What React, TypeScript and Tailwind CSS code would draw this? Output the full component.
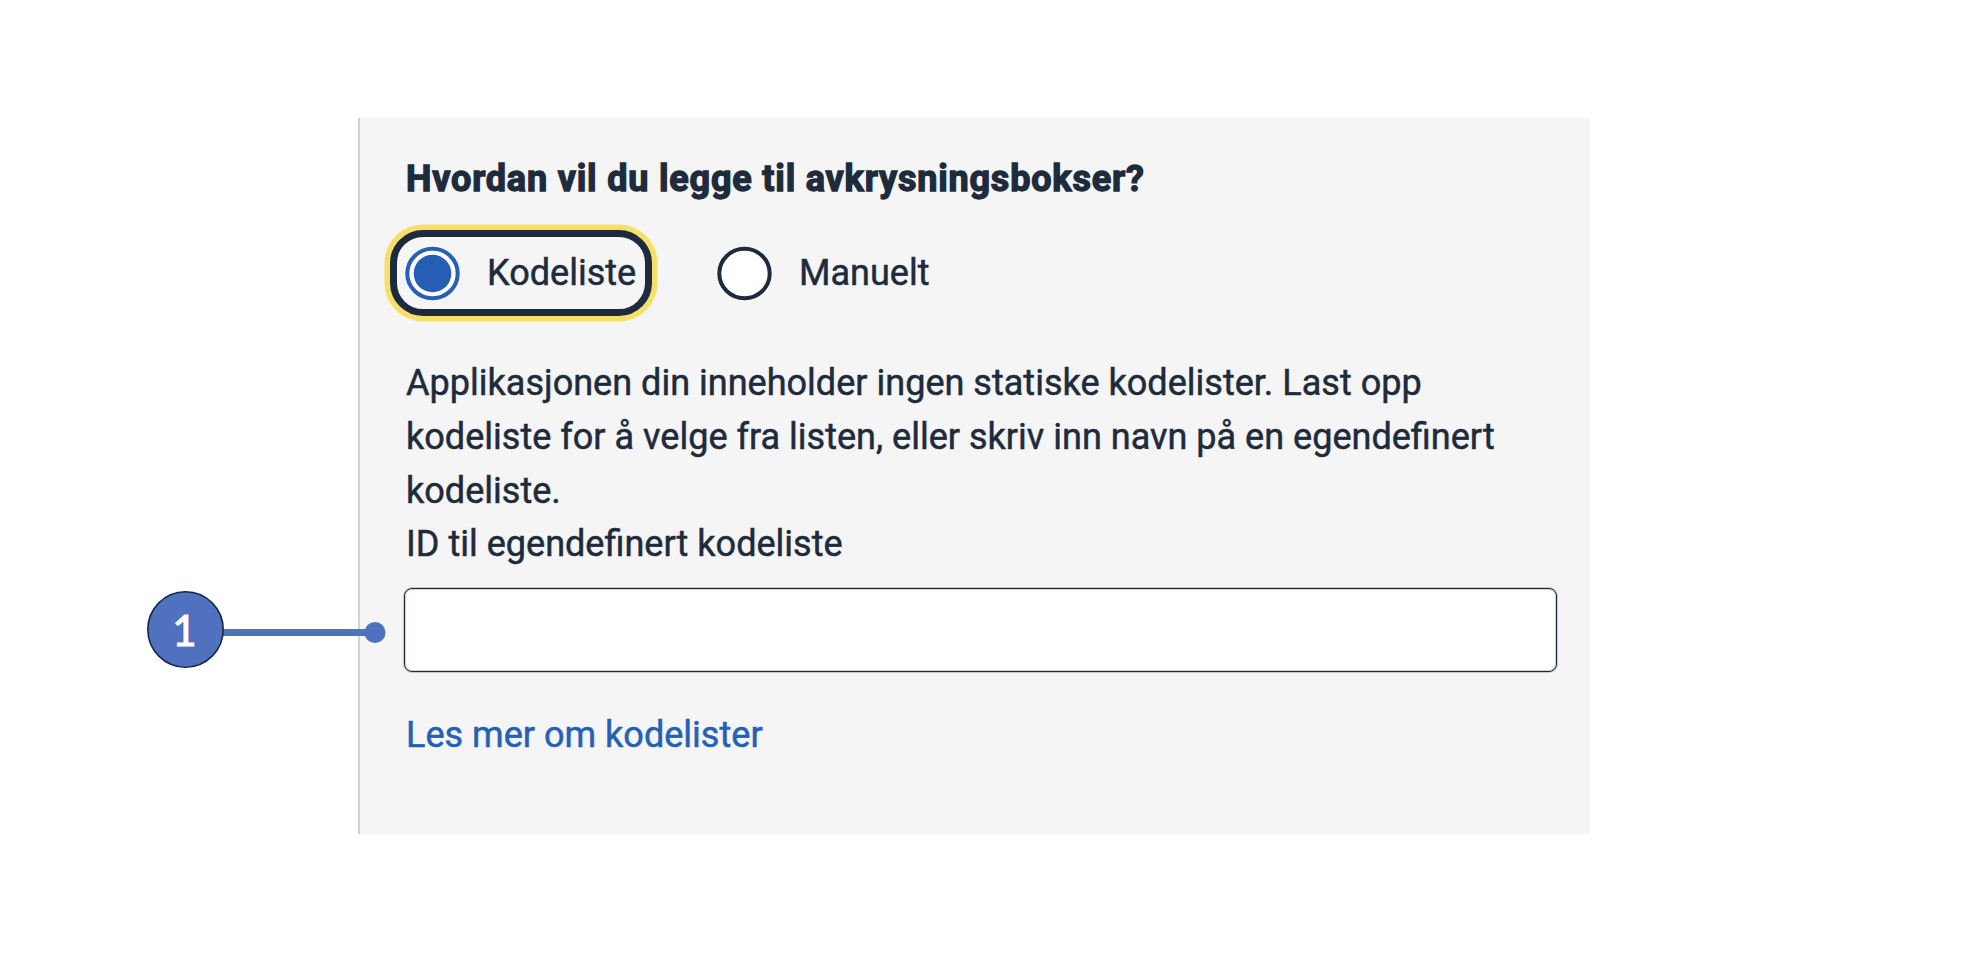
function RadioOption({ label, checked, className }: { label: string; checked?: boolean; className: string }) {
  return (
    <label className={`flex items-center ${className}`}>
      <svg className="block h-[55px] w-[55px] shrink-0" viewBox="0 0 55 55">
        <ellipse cx="27.5" cy="27.5" rx="25.2" ry="24.8" fill="#fff" stroke={checked ? "#2660b8" : "#1e2b3c"} strokeWidth="4" />
        {checked && <circle cx="27.5" cy="27.5" r="18.8" fill="#265eb5" />}
      </svg>
      <span className="ml-[27px] whitespace-nowrap leading-[54px]">{label}</span>
    </label>
  );
}

export default function App() {
  return (
    <div className="relative h-[962px] w-[1976px] overflow-hidden bg-white pt-[118px] pl-[358px] font-['Roboto',sans-serif] text-[36.06px] leading-[54px] text-[#1e2b3c] [-webkit-text-stroke:0.5px_currentColor]">
      <main className="flex h-[716px] w-[1232px] flex-col border-l-2 border-[#d2d3d4] bg-[#f5f5f5] pl-[44px]">
        <h1 className="mt-[34px] ml-[2px] text-[36px] leading-[54px] font-bold tracking-[0.81px] whitespace-nowrap [-webkit-text-stroke:1.3px_currentColor]">
          Hvordan vil du legge til avkrysningsbokser?
        </h1>
        <div className="mt-[24px] -ml-[14px] flex h-[86px] items-center">
          <RadioOption
            label="Kodeliste"
            checked
            className="h-[86px] w-[262px] rounded-[33px] border-[7px] border-[#1e2b3c] pl-[8px] shadow-[0_0_0_5.5px_#f7e065]"
          />
          <RadioOption label="Manuelt" className="ml-[65px]" />
        </div>
        <p className="mt-[40px] ml-[2px] whitespace-nowrap">
          Applikasjonen din inneholder ingen statiske kodelister. Last opp
          <br />
          kodeliste for å velge fra listen, eller skriv inn navn på en egendefinert
          <br />
          kodeliste.
        </p>
        <label htmlFor="codelist-id" className="-mt-px ml-[2px]">ID til egendefinert kodeliste</label>
        <input
          id="codelist-id"
          className="mt-[17px] h-[84px] w-[1153px] rounded-[8px] border border-[#1e2b3c] bg-white px-4 shadow-[0_0_0_1px_#1e2b3c38,inset_0_0_0_1px_#1e2b3c38] outline-none"
        />
        <a href="#" className="mt-[36px] ml-[2px] self-start whitespace-nowrap text-[#2560b6]">Les mer om kodelister</a>
      </main>
      <div className="absolute top-[591px] left-[147px] h-[77px] w-[240px]">
        <svg className="block h-full w-full" viewBox="0 0 240 77">
          <path d="M70 41.5H228" stroke="#4f71be" strokeWidth="7" />
          <circle cx="228" cy="41.5" r="10.5" fill="#4f71be" />
          <circle cx="38.5" cy="38.5" r="37.7" fill="#4f71be" stroke="#172747" strokeWidth="1.6" />
        </svg>
        <span className="absolute top-px -left-px w-[77px] text-center font-['Lato',sans-serif] text-[42px] leading-[77px] text-white [-webkit-text-stroke:1px_currentColor]">1</span>
      </div>
    </div>
  );
}
